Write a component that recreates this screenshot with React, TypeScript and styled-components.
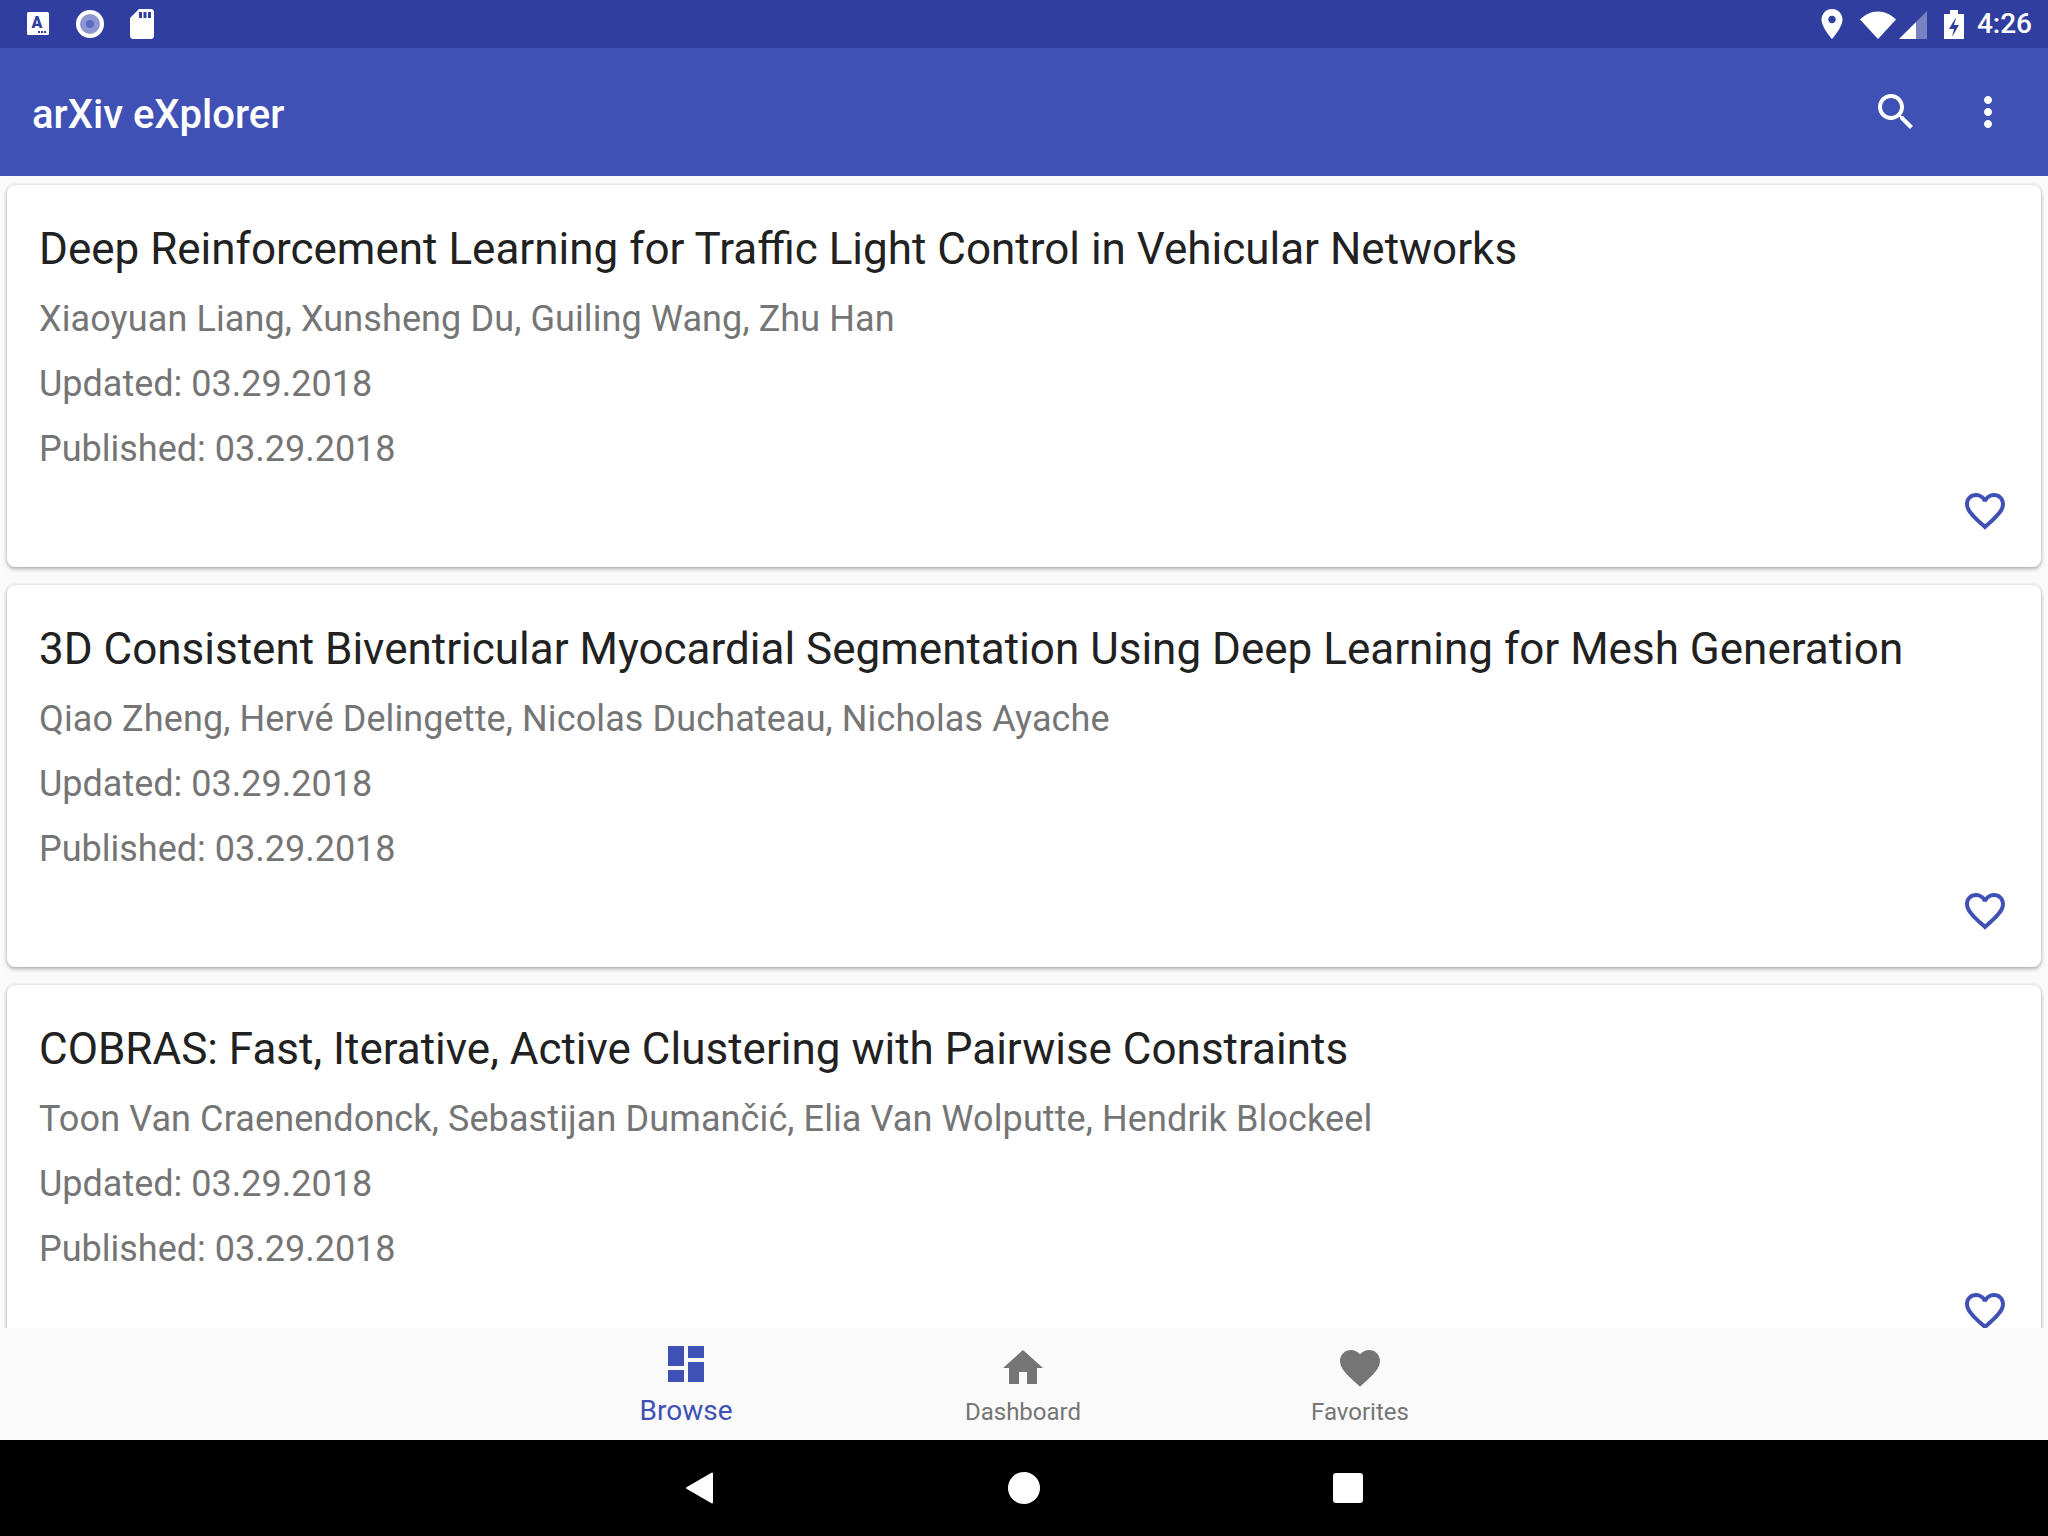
import { FC } from 'react';
import styled, { createGlobalStyle } from 'styled-components';

const PRIMARY = '#3f51b5';

interface IPaper {
  title: string;
  authors: string;
  updated: string;
  published: string;
}

const PAPERS: IPaper[] = [
  {
    title: 'Deep Reinforcement Learning for Traffic Light Control in Vehicular Networks',
    authors: 'Xiaoyuan Liang, Xunsheng Du, Guiling Wang, Zhu Han',
    updated: '03.29.2018',
    published: '03.29.2018',
  },
  {
    title: '3D Consistent Biventricular Myocardial Segmentation Using Deep Learning for Mesh Generation',
    authors: 'Qiao Zheng, Hervé Delingette, Nicolas Duchateau, Nicholas Ayache',
    updated: '03.29.2018',
    published: '03.29.2018',
  },
  {
    title: 'COBRAS: Fast, Iterative, Active Clustering with Pairwise Constraints',
    authors: 'Toon Van Craenendonck, Sebastijan Dumančić, Elia Van Wolputte, Hendrik Blockeel',
    updated: '03.29.2018',
    published: '03.29.2018',
  },
];

const ICONS = {
  search:
    'M15.5 14h-.79l-.28-.27C15.41 12.59 16 11.11 16 9.5 16 5.91 13.09 3 9.5 3S3 5.91 3 9.5 5.91 16 9.5 16c1.61 0 3.09-.59 4.23-1.57l.27.28v.79l5 4.99L20.49 19l-4.99-5zm-6 0C7.01 14 5 11.99 5 9.5S7.01 5 9.5 5 14 7.01 14 9.5 11.99 14 9.5 14z',
  more: 'M12 8c1.1 0 2-.9 2-2s-.9-2-2-2-2 .9-2 2 .9 2 2 2zm0 2c-1.1 0-2 .9-2 2s.9 2 2 2 2-.9 2-2-.9-2-2-2zm0 6c-1.1 0-2 .9-2 2s.9 2 2 2 2-.9 2-2-.9-2-2-2z',
  heartOutline:
    'M16.5 3c-1.74 0-3.41.81-4.5 2.09C10.91 3.81 9.24 3 7.5 3 4.42 3 2 5.42 2 8.5c0 3.78 3.4 6.86 8.55 11.54L12 21.35l1.45-1.32C18.6 15.36 22 12.28 22 8.5 22 5.42 19.58 3 16.5 3zm-4.4 15.55l-.1.1-.1-.1C7.14 14.24 4 11.39 4 8.5 4 6.5 5.5 5 7.5 5c1.54 0 3.04.99 3.57 2.36h1.87C13.46 5.99 14.96 5 16.5 5c2 0 3.5 1.5 3.5 3.5 0 2.89-3.14 5.74-7.9 10.05z',
  heart:
    'M12 21.35l-1.45-1.32C5.4 15.36 2 12.28 2 8.5 2 5.42 4.42 3 7.5 3c1.74 0 3.41.81 4.5 2.09C13.09 3.81 14.76 3 16.5 3 19.58 3 22 5.42 22 8.5c0 3.78-3.4 6.86-8.55 11.54L12 21.35z',
  home: 'M10 20v-6h4v6h5v-8h3L12 3 2 12h3v8z',
  dashboard: 'M3 13h8V3H3v10zm0 8h8v-6H3v6zm10 0h8V11h-8v10zm0-18v6h8V3h-8z',
  place:
    'M12 2C8.13 2 5 5.13 5 9c0 5.25 7 13 7 13s7-7.75 7-13c0-3.87-3.13-7-7-7zm0 9.5c-1.38 0-2.5-1.12-2.5-2.5s1.12-2.5 2.5-2.5 2.5 1.12 2.5 2.5-1.12 2.5-2.5 2.5z',
  sdCard:
    'M18 2h-8L4.02 8 4 20c0 1.1.9 2 2 2h12c1.1 0 2-.9 2-2V4c0-1.1-.9-2-2-2zm-6 6h-2V4h2v4zm3 0h-2V4h2v4zm3 0h-2V4h2v4z',
};

const MaterialIcon: FC<{ path: string; size: number; color: string }> = ({ path, size, color }) => (
  <svg width={size} height={size} viewBox="0 0 24 24" fill={color}>
    <path d={path} />
  </svg>
);

const PaperCard: FC<{ paper: IPaper }> = ({ paper }) => (
  <SCard>
    <STitle>{paper.title}</STitle>
    <SAuthors>{paper.authors}</SAuthors>
    <SMetaList>
      <SMeta>Updated: {paper.updated}</SMeta>
      <SMeta>Published: {paper.published}</SMeta>
    </SMetaList>
    <SCardFooter>
      <MaterialIcon path={ICONS.heartOutline} size={48} color={PRIMARY} />
    </SCardFooter>
  </SCard>
);

const TabItem: FC<{ label: string; path: string; active?: boolean }> = ({ label, path, active = false }) => (
  <STab $active={active}>
    <MaterialIcon path={path} size={48} color={active ? PRIMARY : '#757575'} />
    <STabLabel $active={active}>{label}</STabLabel>
  </STab>
);

export default function App() {
  return (
    <>
      <GlobalStyle />
      <SScreen>
        <SStatusBar>
          <SStatusGroup>
            <svg width="36" height="36" viewBox="0 0 36 36">
              <rect x="7" y="6" width="22" height="23" rx="1.500" fill="#fff" />
              <text x="17" y="22" fontFamily="Roboto" fontWeight="900" fontSize="16" textAnchor="middle" fill="#303f9f">
                A
              </text>
              <rect x="18" y="25" width="2" height="2" fill="#303f9f" />
              <rect x="21" y="25" width="2" height="2" fill="#303f9f" />
              <rect x="24" y="25" width="2" height="2" fill="#303f9f" />
            </svg>
            <svg width="36" height="36" viewBox="0 0 36 36">
              <circle cx="18" cy="18" r="14" fill="#fff" />
              <circle cx="18" cy="18" r="10" fill="#8c96d0" />
              <circle cx="18" cy="18" r="4" fill="#5c6bc0" />
            </svg>
            <MaterialIcon path={ICONS.sdCard} size={36} color="#fff" />
          </SStatusGroup>
          <SStatusGroup>
            <MaterialIcon path={ICONS.place} size={36} color="#fff" />
            <SStatusCluster>
              <svg width="36" height="28" viewBox="0 0 36 28">
                <path d="M0 8.500C5 3.500 11 0.500 18 0.500S31 3.500 36 8.500L18 28z" fill="#fff" />
              </svg>
              <svg width="28" height="28" viewBox="0 0 28 28">
                <path d="M0 28L17 11V28z" fill="#fff" />
                <path d="M17 11L28 0V28H17z" fill="#fff" fillOpacity="0.35" />
              </svg>
            </SStatusCluster>
            <svg width="20" height="29" viewBox="0 0 20 29">
              <path
                fillRule="evenodd"
                d="M6 0h8v4h6v25H0V4h6zM11.500 8L5 19h5l-2 8 7-12h-5l2-7z"
                fill="#fff"
              />
            </svg>
            <STime>4:26</STime>
          </SStatusGroup>
        </SStatusBar>

        <SAppBar>
          <SAppTitle>arXiv eXplorer</SAppTitle>
          <SAppActions>
            <MaterialIcon path={ICONS.search} size={48} color="#fff" />
            <MaterialIcon path={ICONS.more} size={48} color="#fff" />
          </SAppActions>
        </SAppBar>

        <SList>
          {PAPERS.map((paper) => (
            <PaperCard key={paper.title} paper={paper} />
          ))}
        </SList>

        <STabBar>
          <TabItem label="Browse" path={ICONS.dashboard} active />
          <TabItem label="Dashboard" path={ICONS.home} />
          <TabItem label="Favorites" path={ICONS.heart} />
        </STabBar>

        <SNavBar>
          <SNavButton>
            <svg width="30" height="32" viewBox="0 0 30 32">
              <path d="M27 1.500V30.500L2 16z" fill="#fff" stroke="#fff" strokeWidth="2" strokeLinejoin="round" />
            </svg>
          </SNavButton>
          <SNavButton>
            <SHomeDot />
          </SNavButton>
          <SNavButton>
            <SRecentSquare />
          </SNavButton>
        </SNavBar>
      </SScreen>
    </>
  );
}

const GlobalStyle = createGlobalStyle`
  html, body {
    margin: 0;
    padding: 0;
    background: #fafafa;
    font-family: Roboto, "Noto Sans", sans-serif;
  }
`;

const SScreen = styled.div`
  width: 2048px;
  height: 1536px;
  display: flex;
  flex-direction: column;
  overflow: hidden;
  background: #fafafa;
`;

const SStatusBar = styled.div`
  height: 48px;
  flex: none;
  display: flex;
  align-items: center;
  justify-content: space-between;
  padding: 0 16px 0 20px;
  background: #303f9f;
`;

const SStatusGroup = styled.div`
  display: flex;
  align-items: center;
  gap: 16px;
`;

const SStatusCluster = styled.div`
  display: flex;
  align-items: flex-end;
  gap: 3px;
  margin: 2px 1px 0 -6px;
`;

const STime = styled.span`
  color: #fff;
  font-size: 28px;
  font-weight: 500;
  line-height: 48px;
  margin-left: -3px;
`;

const SAppBar = styled.header`
  height: 128px;
  flex: none;
  display: flex;
  align-items: center;
  justify-content: space-between;
  padding: 0 36px 0 32px;
  background: ${PRIMARY};
`;

const SAppTitle = styled.h1`
  margin: 6px 0 0;
  color: #fff;
  font-size: 40px;
  font-weight: 500;
  line-height: 48px;
`;

const SAppActions = styled.div`
  display: flex;
  gap: 44px;
`;

const SList = styled.main`
  flex: 1;
  min-height: 0;
  overflow: hidden;
  display: flex;
  flex-direction: column;
  gap: 18px;
  padding: 9px 7px 0;
`;

const SCard = styled.article`
  flex: none;
  height: 382px;
  box-sizing: border-box;
  padding: 39px 32px 32px;
  display: flex;
  flex-direction: column;
  background: #fff;
  border-radius: 8px;
  box-shadow: 0 2px 4px rgba(0, 0, 0, 0.28), 0 0 3px rgba(0, 0, 0, 0.14);
`;

const STitle = styled.h2`
  margin: 0 0 24px;
  color: #212121;
  font-size: 44px;
  font-weight: 400;
  line-height: 50px;
`;

const SAuthors = styled.div`
  margin-bottom: 22px;
  color: #757575;
  font-size: 36px;
  line-height: 43px;
  letter-spacing: 0.11px;
`;

const SMetaList = styled.div`
  display: flex;
  flex-direction: column;
  gap: 22px;
`;

const SMeta = styled.div`
  color: #757575;
  font-size: 36px;
  line-height: 43px;
`;

const SCardFooter = styled.div`
  margin-top: auto;
  display: flex;
  justify-content: flex-end;
`;

const STabBar = styled.nav`
  height: 112px;
  flex: none;
  display: flex;
  justify-content: center;
  padding-right: 2px;
  background: #fafafa;
`;

const STab = styled.div<{ $active: boolean }>`
  width: 337px;
  display: flex;
  flex-direction: column;
  align-items: center;
  padding-top: ${(props) => (props.$active ? '12px' : '16px')};
`;

const STabLabel = styled.span<{ $active: boolean }>`
  margin-top: ${(props) => (props.$active ? '7px' : '4px')};
  color: ${(props) => (props.$active ? PRIMARY : '#757575')};
  font-size: ${(props) => (props.$active ? '28px' : '24px')};
  line-height: 32px;
`;

const SNavBar = styled.div`
  height: 96px;
  flex: none;
  display: flex;
  justify-content: center;
  background: #000;
`;

const SNavButton = styled.div`
  width: 324px;
  display: flex;
  align-items: center;
  justify-content: center;
`;

const SHomeDot = styled.div`
  width: 32px;
  height: 32px;
  border-radius: 50%;
  background: #fff;
`;

const SRecentSquare = styled.div`
  width: 30px;
  height: 30px;
  border-radius: 3px;
  background: #fff;
`;
